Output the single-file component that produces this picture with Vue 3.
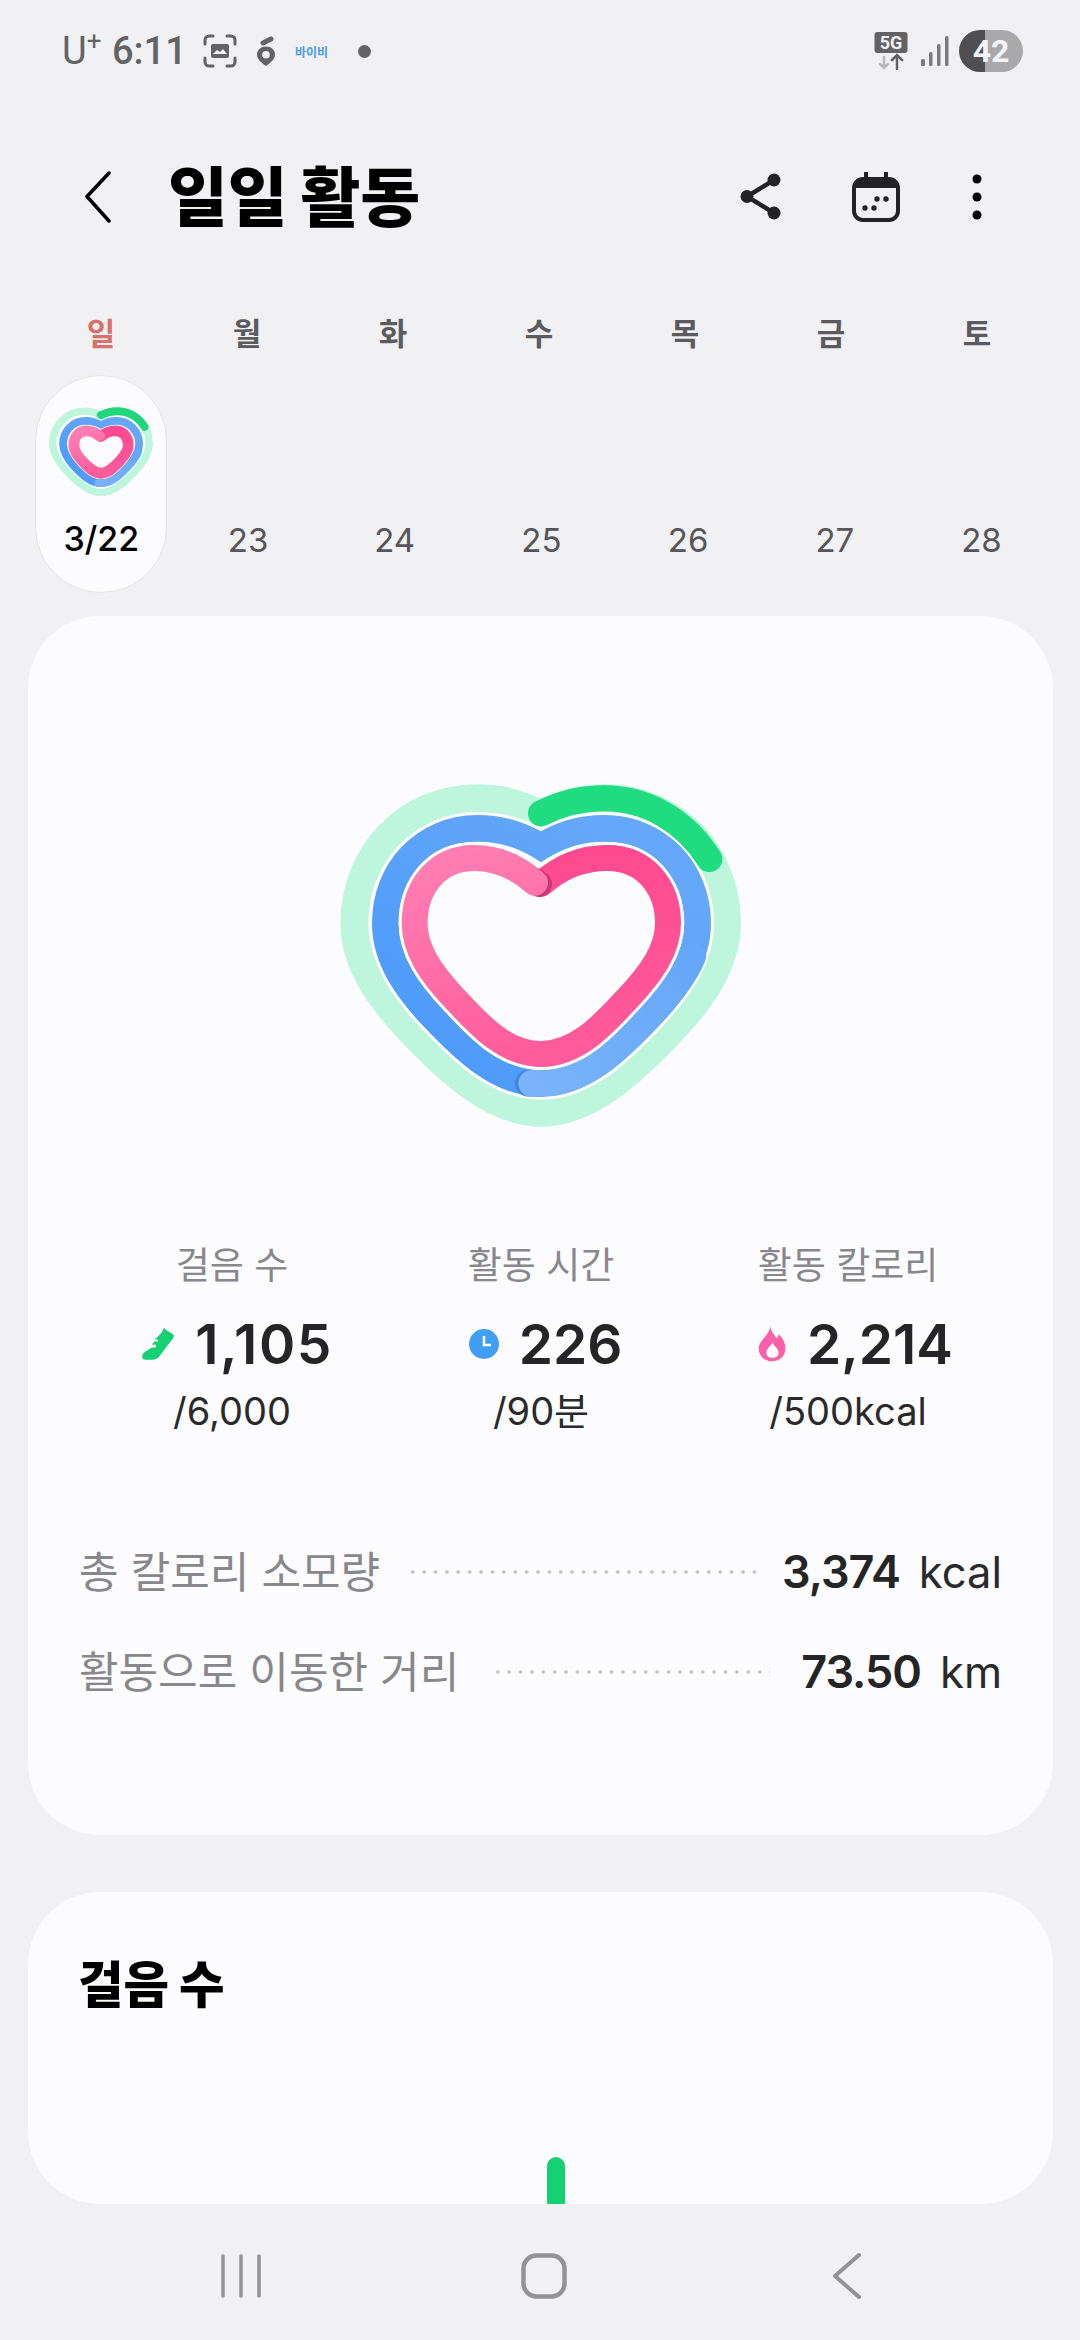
<script setup>
const days = [
  { name: '일', sun: true },
  { name: '월' },
  { name: '화' },
  { name: '수' },
  { name: '목' },
  { name: '금' },
  { name: '토' }
]
const dates = ['23', '24', '25', '26', '27', '28']
</script>

<template>
  <div class="page">
    <div class="status">
      <span class="carrier">U<sup>+</sup></span>
      <span class="time">6:11</span>
      <svg class="st-shot" width="34" height="34" viewBox="0 0 34 34" fill="none">
        <path d="M2 10V6a4 4 0 0 1 4-4h4M24 2h4a4 4 0 0 1 4 4v4M32 24v4a4 4 0 0 1-4 4h-4M10 32H6a4 4 0 0 1-4-4v-4" stroke="#636366" stroke-width="3" stroke-linecap="round"/>
        <rect x="8" y="10" width="18" height="14" rx="2" fill="#636366"/>
        <path d="M10 20l4-4 3 2 3-3 4 5z" fill="#f1f1f3"/>
      </svg>
      <svg class="st-turnip" width="20" height="30" viewBox="0 0 20 30">
        <path d="M7 7l8-4" stroke="#636366" stroke-width="5" stroke-linecap="round"/>
        <path fill-rule="evenodd" d="M10 10.500c5 0 9 3.500 9 8 0 4.500-4 8-9 11.500C5 26.500 1 23 1 18.500c0-4.500 4-8 9-8zM10 15a3.800 3.800 0 1 0 0 7.600 3.800 3.800 0 0 0 0-7.600z" fill="#636366"/>
      </svg>
      <span class="st-app">바이비</span>
      <span class="st-dot"></span>
      <svg class="st-5g" width="34" height="38" viewBox="0 0 34 38">
        <rect x="0.500" y="0" width="33" height="21" rx="3" fill="#636366"/>
        <text x="17" y="17" text-anchor="middle" class="st-5g-text">5G</text>
        <path d="M10 25v11M6 32l4 4 4-4" stroke="#b9b9bc" stroke-width="2.500" fill="none" stroke-linecap="round"/>
        <path d="M23 37V23M18 28l5-5 5 5" stroke="#636366" stroke-width="2.500" fill="none" stroke-linecap="round"/>
      </svg>
      <svg class="st-signal" width="28" height="30" viewBox="0 0 28 30">
        <rect x="0" y="23" width="4" height="7" rx="1.500" fill="#7b7b7e"/>
        <rect x="8" y="16" width="3.500" height="14" rx="1.500" fill="#7b7b7e"/>
        <rect x="16" y="8" width="3.500" height="22" rx="1.500" fill="#7b7b7e"/>
        <rect x="24" y="0" width="3.500" height="30" rx="1.500" fill="#7b7b7e"/>
      </svg>
      <span class="battery">42</span>
    </div>

    <header class="head">
      <svg class="back" width="26" height="52" viewBox="0 0 26 52" fill="none">
        <path d="M24 2L2 25.500 24 50" stroke="#000" stroke-width="3.500" stroke-linecap="round" stroke-linejoin="round"/>
      </svg>
      <h1 class="title">일일 활동</h1>
      <svg class="share" width="42" height="48" viewBox="0 0 42 48">
        <path d="M34 7L7 23.500 34 40" stroke="#232325" stroke-width="4.500" fill="none"/>
        <circle cx="34" cy="7" r="6.500" fill="#232325"/>
        <circle cx="7" cy="23.500" r="6.500" fill="#232325"/>
        <circle cx="34" cy="40" r="6.500" fill="#232325"/>
      </svg>
      <svg class="cal" width="48" height="50" viewBox="0 0 48 50" fill="none">
        <path d="M14 1v8M34 1v8" stroke="#232325" stroke-width="4" stroke-linecap="round"/>
        <rect x="2" y="7" width="44" height="41" rx="9" stroke="#232325" stroke-width="4"/>
        <path d="M3 16a9 9 0 0 1 9-8h24a9 9 0 0 1 9 8z" fill="#232325"/>
        <circle cx="13" cy="36" r="2.700" fill="#232325"/>
        <circle cx="22" cy="36" r="2.700" fill="#232325"/>
        <circle cx="25" cy="27" r="2.700" fill="#232325"/>
        <circle cx="34" cy="27" r="2.700" fill="#232325"/>
      </svg>
      <svg class="more" width="10" height="46" viewBox="0 0 10 46">
        <circle cx="5" cy="5" r="4.500" fill="#000"/>
        <circle cx="5" cy="23" r="4.500" fill="#000"/>
        <circle cx="5" cy="41" r="4.500" fill="#000"/>
      </svg>
    </header>

    <div class="week">
      <span v-for="d in days" :key="d.name" class="wd" :class="{ sun: d.sun }">{{ d.name }}</span>
    </div>
    <div class="dates">
      <div class="pill">
        <svg class="mini" width="114" height="99" viewBox="0 0 1320 1140" fill="none">
          <path stroke="#bdf5dd" stroke-width="84" d="M660 165C600 130 540 115 470 115C260 115 100 280 100 490C100 620 190 730 270 815C370 920 510 1058 660 1058C810 1058 950 920 1050 815C1130 730 1218 620 1218 490C1218 280 1060 115 850 115C780 115 720 130 660 165Z"/>
          <g transform="translate(660 587) scale(.94) translate(-660 -587)">
            <path stroke="#fff" stroke-width="108" d="M660 260C605 225 545 205 470 205C310 205 193 330 193 490C193 600 260 690 335 770C425 865 530 970 660 970C790 970 895 865 985 770C1060 690 1130 600 1130 490C1130 330 1010 205 850 205C775 205 715 225 660 260Z"/>
            <path stroke="url(#blueBase)" stroke-width="96" d="M660 260C605 225 545 205 470 205C310 205 193 330 193 490C193 600 260 690 335 770C425 865 530 970 660 970C790 970 895 865 985 770C1060 690 1130 600 1130 490C1130 330 1010 205 850 205C775 205 715 225 660 260Z"/>
            <path stroke="url(#blueTop)" stroke-width="96" stroke-linecap="round" d="M632 970C640 970 650 970 660 970C790 970 895 865 985 770C1040 712 1090 650 1115 590"/>
          </g>
          <g transform="translate(660 587) scale(.83) translate(-660 -587)">
            <path stroke="#fff" stroke-width="166" d="M660 365C600 320 540 294 460 294C350 294 281 380 281 490C281 570 330 640 400 715C470 790 550 882 660 882C770 882 850 790 920 715C990 640 1041 570 1041 490C1041 380 970 294 860 294C780 294 720 320 660 365Z"/>
            <path stroke="url(#pinkRight)" stroke-width="150" stroke-linecap="round" d="M660 372C720 320 780 294 860 294C970 294 1041 380 1041 490C1041 570 990 640 920 715C850 790 770 882 660 882"/>
            <path stroke="url(#pinkLeft)" stroke-width="150" stroke-linecap="round" d="M660 882C550 882 470 790 400 715C330 640 281 570 281 490C281 380 350 294 460 294C530 294 590 322 642 368"/>
          </g>
          <path stroke="#1fd67c" stroke-width="92" stroke-linecap="round" d="M660 160C720 130 780 115 850 115C980 115 1095 185 1165 297"/>
        </svg>
        <span class="pill-date">3/22</span>
      </div>
      <span v-for="n in dates" :key="n" class="date">{{ n }}</span>
    </div>

    <section class="card main">
      <svg class="heart" width="440" height="380" viewBox="0 0 1320 1140" fill="none">
        <defs>
          <linearGradient id="blueBase" gradientUnits="userSpaceOnUse" x1="300" y1="900" x2="800" y2="200">
            <stop offset="0" stop-color="#4b9afb"/>
            <stop offset="1" stop-color="#65a7f8"/>
          </linearGradient>
          <linearGradient id="blueTop" gradientUnits="userSpaceOnUse" x1="630" y1="970" x2="1080" y2="560">
            <stop offset="0" stop-color="#7ab3fb"/>
            <stop offset="1" stop-color="#65a7f8"/>
          </linearGradient>
          <linearGradient id="pinkLeft" gradientUnits="userSpaceOnUse" x1="400" y1="290" x2="620" y2="880">
            <stop offset="0" stop-color="#ff7db2"/>
            <stop offset="1" stop-color="#ff5c9c"/>
          </linearGradient>
          <linearGradient id="pinkRight" gradientUnits="userSpaceOnUse" x1="760" y1="290" x2="800" y2="880">
            <stop offset="0" stop-color="#ff4a90"/>
            <stop offset="1" stop-color="#ff5b9c"/>
          </linearGradient>
        </defs>
        <path stroke="#bdf5dd" stroke-width="84" d="M660 165C600 130 540 115 470 115C260 115 100 280 100 490C100 620 190 730 270 815C370 920 510 1058 660 1058C810 1058 950 920 1050 815C1130 730 1218 620 1218 490C1218 280 1060 115 850 115C780 115 720 130 660 165Z"/>
        <path stroke="#fff" stroke-width="98" d="M660 260C605 225 545 205 470 205C310 205 193 330 193 490C193 600 260 690 335 770C425 865 530 970 660 970C790 970 895 865 985 770C1060 690 1130 600 1130 490C1130 330 1010 205 850 205C775 205 715 225 660 260Z"/>
        <path stroke="url(#blueBase)" stroke-width="80" d="M660 260C605 225 545 205 470 205C310 205 193 330 193 490C193 600 260 690 335 770C425 865 530 970 660 970C790 970 895 865 985 770C1060 690 1130 600 1130 490C1130 330 1010 205 850 205C775 205 715 225 660 260Z"/>
        <path stroke="#3f7fd0" stroke-opacity=".75" stroke-width="80" stroke-linecap="round" d="M622 970L660 970"/>
        <path stroke="url(#blueTop)" stroke-width="80" stroke-linecap="round" d="M632 970C640 970 650 970 660 970C790 970 895 865 985 770C1040 712 1090 650 1115 590"/>
        <path stroke="#fff" stroke-width="96" d="M660 365C600 320 540 294 460 294C350 294 281 380 281 490C281 570 330 640 400 715C470 790 550 882 660 882C770 882 850 790 920 715C990 640 1041 570 1041 490C1041 380 970 294 860 294C780 294 720 320 660 365Z"/>
        <path stroke="url(#pinkRight)" stroke-width="78" stroke-linecap="round" d="M660 372C720 320 780 294 860 294C970 294 1041 380 1041 490C1041 570 990 640 920 715C850 790 770 882 660 882"/>
        <path stroke="#c8367a" stroke-width="78" stroke-linecap="round" d="M640 362L654 372"/>
        <path stroke="url(#pinkLeft)" stroke-width="78" stroke-linecap="round" d="M660 882C550 882 470 790 400 715C330 640 281 570 281 490C281 380 350 294 460 294C530 294 590 322 642 368"/>
        <path stroke="#1fdc80" stroke-width="78" stroke-linecap="round" d="M660 160C720 130 780 115 850 115C980 115 1095 185 1165 297"/>
      </svg>

      <div class="stats">
        <div class="stat s1">
          <div class="stat-label">걸음 수</div>
          <div class="stat-num">
            <svg width="34" height="34" viewBox="22 28 104 104"><path d="M92 30C98 38 108 42 120 50C126 56 120 64 114 70L80 115C74 125 66 128 55 128L35 128C26 128 24 120 27 112C33 100 45 100 52 92L68 90L68 82L56 82L62 72L74 72L74 66L64 66C72 58 85 50 92 30Z" fill="#14d273"/></svg>
            <span>1,105</span>
          </div>
          <div class="stat-sub">/6,000</div>
        </div>
        <div class="stat s2">
          <div class="stat-label">활동 시간</div>
          <div class="stat-num">
            <svg width="30" height="30" viewBox="0 0 30 30"><circle cx="15" cy="15" r="15" fill="#429ef5"/><path d="M15 7v9h7" stroke="#fff" stroke-width="2.500" fill="none"/></svg>
            <span>226</span>
          </div>
          <div class="stat-sub">/90분</div>
        </div>
        <div class="stat s3">
          <div class="stat-label">활동 칼로리</div>
          <div class="stat-num">
            <svg width="30" height="36" viewBox="20 25 87 112"><path fill-rule="evenodd" d="M58 25C60 42 70 50 78 64C82 58 84 56 84 50C100 66 107 82 105 100C102 122 85 135 65 135C42 135 22 120 22 95C22 70 55 55 58 25ZM65 76C70 88 84 95 84 108C84 119 75 124 65 124C55 124 46 119 46 108C46 95 60 88 65 76Z" fill="#fd5fa8"/></svg>
            <span>2,214</span>
          </div>
          <div class="stat-sub">/500kcal</div>
        </div>
      </div>

      <div class="row">
        <span class="row-label">총 칼로리 소모량</span>
        <span class="leader"></span>
        <span class="row-val">3,374</span>
        <span class="row-unit">kcal</span>
      </div>
      <div class="row">
        <span class="row-label">활동으로 이동한 거리</span>
        <span class="leader"></span>
        <span class="row-val">73.50</span>
        <span class="row-unit">km</span>
      </div>
    </section>

    <section class="card steps">
      <h2 class="steps-title">걸음 수</h2>
      <div class="chart"><span class="bar"></span></div>
    </section>

    <nav class="nav">
      <svg width="42" height="44" viewBox="0 0 42 44" fill="none">
        <path d="M3 2v40M21 2v40M39 2v40" stroke="#939395" stroke-width="3.500" stroke-linecap="round"/>
      </svg>
      <svg class="home" width="46" height="46" viewBox="0 0 46 46" fill="none">
        <rect x="2.500" y="2.500" width="41" height="41" rx="13" stroke="#939395" stroke-width="4.500"/>
      </svg>
      <svg width="30" height="46" viewBox="0 0 30 46" fill="none">
        <path d="M27 2L3 23l24 21" stroke="#939395" stroke-width="4" stroke-linecap="round" stroke-linejoin="round"/>
      </svg>
    </nav>
  </div>
</template>

<style scoped>
.page {
  width: 1080px;
  height: 2340px;
  overflow: hidden;
  background: #f1f1f3;
  font-family: Inter, "Noto Sans CJK KR", sans-serif;
  display: flex;
  flex-direction: column;
}
.status {
  height: 102px;
  display: flex;
  align-items: center;
  padding: 0 57px 0 62px;
  color: #636366;
  font-family: Roboto, "Noto Sans CJK KR", sans-serif;
}
.carrier { font-size: 38px; width: 50px; line-height: 1; }
.carrier sup { font-size: 26px; line-height: 0; vertical-align: 14px; }
.time { font-size: 38px; font-weight: 500; width: 91px; line-height: 1; white-space: nowrap; }
.st-turnip { margin-left: 19px; }
.st-app { margin-left: 19px; width: 63px; font-size: 12px; font-weight: 700; color: #4a9de8; white-space: nowrap; }
.st-dot { width: 13px; height: 13px; border-radius: 50%; background: #636366; }
.st-5g { margin-left: auto; }
.st-5g-text { font: 700 18px Roboto, sans-serif; fill: #f1f1f3; }
.st-signal { margin-left: 13px; }
.battery {
  margin-left: 10px;
  width: 64px;
  height: 42px;
  border-radius: 21px;
  background: linear-gradient(90deg, #4f4f52 0 26px, #a9a9ac 26px);
  color: #f4f4f6;
  font-size: 32px;
  font-weight: 700;
  line-height: 42px;
  text-align: center;
}
.head {
  height: 190px;
  display: flex;
  align-items: center;
  padding: 0 98px 0 85px;
}
.title {
  margin: 0 0 0 57px;
  font-size: 65px;
  font-weight: 900;
  color: #000;
  line-height: 1;
}
.share { margin-left: auto; }
.cal { margin-left: 70px; }
.more { margin-left: 72px; }
.week, .dates {
  display: grid;
  padding-left: 28px;
}
.week {
  grid-template-columns: repeat(7, 146px);
  height: 83px;
  align-items: center;
  box-sizing: border-box;
}
.dates { grid-template-columns: repeat(7, 146.700px); height: 218px; }
.wd {
  text-align: center;
  font-size: 31px;
  font-weight: 700;
  color: #5b5b5f;
  line-height: 40px;
}
.wd.sun { color: #d9706c; }
.pill {
  justify-self: center;
  width: 132px;
  height: 218px;
  box-sizing: border-box;
  padding: 25px 0 33px;
  border: 1px solid #e4e4e6;
  border-radius: 66px;
  background: #fcfcfe;
  display: flex;
  flex-direction: column;
  align-items: center;
  justify-content: space-between;
}
.pill-date { font-size: 34px; font-weight: 500; color: #000; line-height: 40px; }
.date {
  align-self: end;
  padding-bottom: 33px;
  text-align: center;
  font-size: 33px;
  color: #56565a;
  line-height: 40px;
}
.card {
  margin: 0 27px 0 28px;
  background: #fcfcfe;
  border-radius: 72px;
}
.main {
  margin-top: 23px;
  height: 1219px;
  box-sizing: border-box;
  padding-top: 144px;
  display: flex;
  flex-direction: column;
}
.heart { display: block; margin: 0 auto; flex: none; }
.stats {
  margin-top: 106px;
  display: grid;
  grid-template-columns: 306px 312px 302px;
  padding-left: 51px;
}
.stat { text-align: center; }
.stat-label { font-size: 37px; color: #88888c; line-height: 40px; font-weight: 400; }
.stat-num {
  margin-top: 26px;
  height: 64px;
  display: flex;
  align-items: center;
  justify-content: center;
  gap: 20px;
  font-size: 55px;
  font-weight: 600;
  color: #252527;
}
.s1 .stat-num { padding-left: 10px; }
.s1 .stat-num span { letter-spacing: 1.500px; }
.s2 .stat-num { padding-left: 9px; }
.s3 .stat-num { padding-left: 14px; }
.stat-sub { margin-top: 13px; font-size: 38px; line-height: 44px; color: #2a2a2c; }
.row {
  height: 100px;
  display: flex;
  align-items: center;
  padding: 0 51px 0 51px;
}
.stats + .row { margin-top: 89px; }
.row-label { font-size: 43px; color: #88888c; line-height: 50px; white-space: nowrap; }
.leader {
  flex: 1;
  height: 4px;
  margin: 0 22px 0 27px;
  background-image: radial-gradient(circle at center, #c6c6c9 1.500px, transparent 2px);
  background-size: 11.400px 4px;
  background-repeat: repeat-x;
}
.row + .row .leader { margin: 0 31px 0 33px; }
.row-val { font-size: 45px; font-weight: 600; color: #252527; line-height: 50px; letter-spacing: -1px; }
.row-unit { margin-left: 19px; font-size: 43.500px; color: #2a2a2c; line-height: 50px; }
.steps {
  margin-top: 57px;
  height: 312px;
  flex: none;
  box-sizing: border-box;
  padding: 68px 0 0 50px;
  display: flex;
  flex-direction: column;
}
.steps-title { margin: 0; font-size: 49.500px; font-weight: 900; color: #000; line-height: 50px; }
.chart { flex: 1; display: flex; align-items: flex-end; padding-left: 469px; }
.bar { width: 18px; height: 47px; background: #14d273; border-radius: 9px 9px 0 0; }
.nav {
  flex: 1;
  display: flex;
  align-items: center;
  padding: 8px 218px 0 220px;
  justify-content: space-between;
}
.home { margin-right: 6px; }
</style>

<style>
html, body { margin: 0; background: #f1f1f3; }
</style>
